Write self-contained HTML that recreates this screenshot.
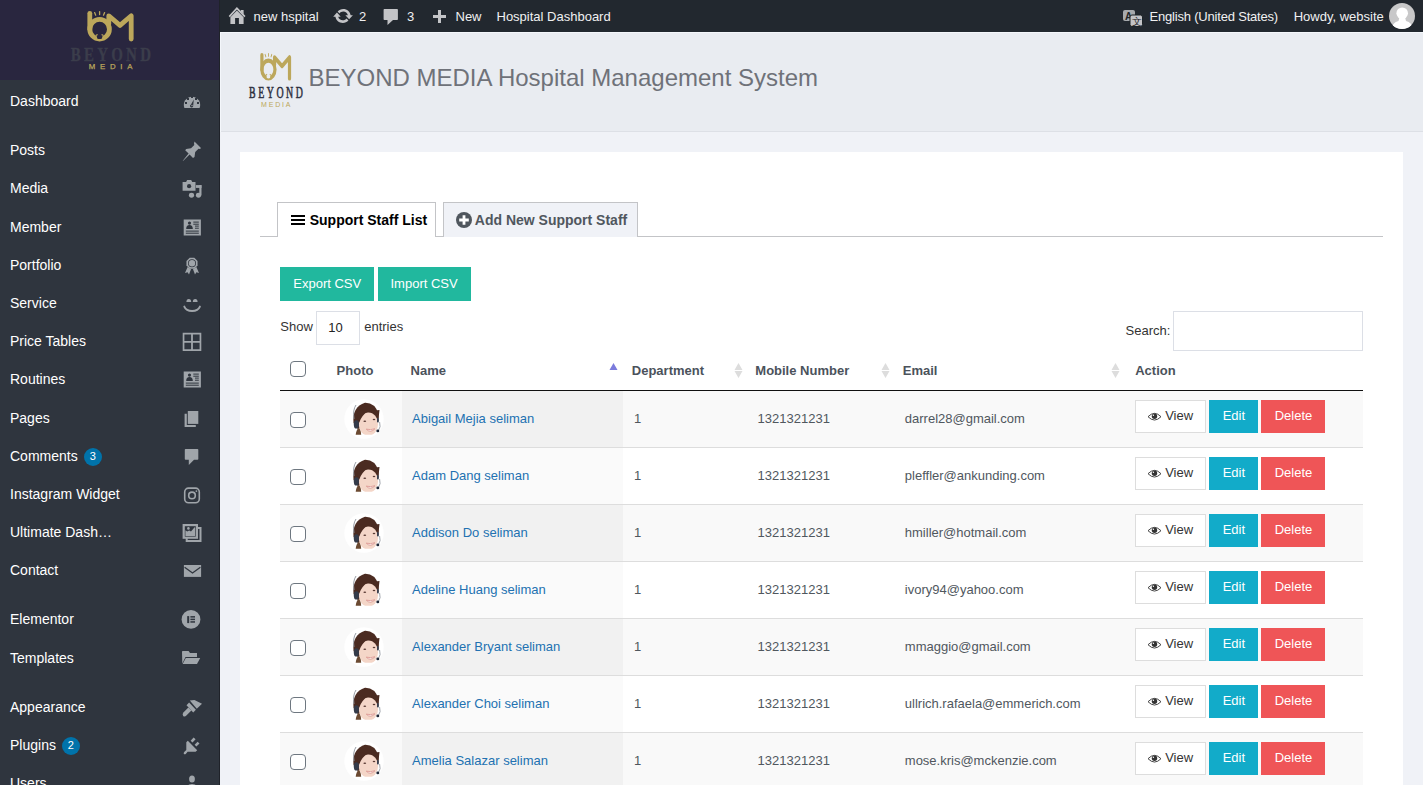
<!DOCTYPE html><html><head><meta charset="utf-8"><title>Support Staff</title><style>
*{margin:0;padding:0;box-sizing:border-box}
html,body{width:1423px;height:785px;overflow:hidden;background:#f0f2f7;font-family:"Liberation Sans",sans-serif}
.t{position:absolute;white-space:nowrap}
.abs{position:absolute}
svg{position:absolute;overflow:visible}
</style></head><body><div class="abs" style="left:0;top:0;width:220px;height:785px;background:#2f353e"></div>
<div class="abs" style="left:0;top:0;width:220px;height:80px;background:#29263f"></div>
<div class="abs" style="left:219px;top:0;width:1px;height:785px;background:#1f2229"></div>
<svg style="left:0;top:0" width="220" height="80" viewBox="0 0 220 80"><g fill="none" stroke="#bca75b" stroke-width="4.8" stroke-linecap="round" stroke-linejoin="round">
<path d="M89.8 13.3 V29.2"/><circle cx="99.6" cy="29.2" r="9.8"/>
<path d="M108.8 24 V15.8 L120 25.4 L131.2 15.8 V39"/>
<path d="M94.6 12.6 L95.7 15.2 M99.6 11.6 V14.6 M104.6 12.6 L103.5 15.2" stroke-width="1.3"/>
</g><path d="M96.6 35 H102.6 L102 38.6 Q99.6 39.6 97.2 38.6 Z" fill="#29263f"/><path d="M95.8 35.6 L97.6 34.4 M103.4 35.6 L101.6 34.4" stroke="#bca75b" stroke-width="1.2"/><g transform="translate(70.7 0) scale(0.78 1)"><text x="0" y="60.7" font-family="Liberation Serif" font-weight="bold" font-size="19.2" fill="#3b3d4b" stroke="#3b3d4b" stroke-width="0.3" textLength="102.9" lengthAdjust="spacing">BEYOND</text></g><text x="88.8" y="68.9" font-family="Liberation Sans" font-size="7.8" fill="#bca75b" stroke="#bca75b" stroke-width="0.25" textLength="43.6" lengthAdjust="spacing">MEDIA</text></svg>
<div class="t" style="left:10px;top:94.00px;font-size:14px;line-height:14px;color:#ffffff;font-weight:normal;">Dashboard</div>
<svg style="left:172px;top:86px" width="40" height="30" viewBox="172 86 40 30"><path d="M184.4 108 A8.2 8.2 0 1 1 199.6 108 Z" fill="#a0a5aa"/><rect x="185" y="102" width="2" height="2" fill="#2f353e"/><rect x="187" y="98" width="2" height="2" fill="#2f353e"/><rect x="191" y="96" width="2" height="2" fill="#2f353e"/><rect x="195" y="98" width="2" height="2" fill="#2f353e"/><rect x="197" y="102" width="2" height="2" fill="#2f353e"/><path d="M193.8 99.5 L193.2 105.6 A1.6 1.6 0 1 1 191 104.4 Z" fill="#2f353e"/><circle cx="192" cy="105.5" r=".7" fill="#a0a5aa"/></svg>
<div class="t" style="left:10px;top:143.00px;font-size:14px;line-height:14px;color:#ffffff;font-weight:normal;">Posts</div>
<svg style="left:172px;top:135px" width="40" height="30" viewBox="172 135 40 30"><path d="M194.5 141.5 L201 148 L200 149 L198.5 148.7 L195.2 152 L194.5 157 L193 158 L189.6 154.6 L183 161 L182.8 160.8 L188.6 153.6 L185.2 150.2 L186.2 149 L191 148.3 L194.3 145 L194 143.5 Z" fill="#a0a5aa"/></svg>
<div class="t" style="left:10px;top:181.00px;font-size:14px;line-height:14px;color:#ffffff;font-weight:normal;">Media</div>
<svg style="left:172px;top:173px" width="40" height="30" viewBox="172 173 40 30"><g transform="translate(0 0)"><path d="M182.6 181.9 h3.5 l1-1.8 h4.1 l1 1.8 h3.3 v8.9 h-12.9 z" fill="#a0a5aa"/><circle cx="189.1" cy="186.2" r="2.1" fill="#2f353e"/><ellipse cx="191.5" cy="195.3" rx="2.6" ry="2.45" fill="#a0a5aa"/><ellipse cx="198.5" cy="195.3" rx="2.6" ry="2.45" fill="#a0a5aa"/><rect x="199.3" y="185.1" width="2.2" height="10.2" fill="#a0a5aa"/><rect x="195.9" y="185.1" width="5.6" height="2.8" fill="#a0a5aa"/></g></svg>
<div class="t" style="left:10px;top:220.00px;font-size:14px;line-height:14px;color:#ffffff;font-weight:normal;">Member</div>
<svg style="left:172px;top:212px" width="40" height="30" viewBox="172 212 40 30"><rect x="183.7" y="219.5" width="17.2" height="16" fill="#a0a5aa"/><circle cx="189.5" cy="223.1" r="1.6" fill="#2f353e"/><path d="M186.2 229.1 q0-4 3.3-4 q3.3 0 3.3 4z" fill="#2f353e"/><rect x="193.3" y="221.6" width="5.5" height="1" fill="#2f353e"/><rect x="193.3" y="223.7" width="5.5" height="1" fill="#2f353e"/><rect x="195" y="225.6" width="3.8000000000000114" height="1" fill="#2f353e"/><rect x="195" y="227.7" width="3.8000000000000114" height="1" fill="#2f353e"/><rect x="185.8" y="230.6" width="13" height="1" fill="#2f353e"/><rect x="185.8" y="232.7" width="13" height="1" fill="#2f353e"/></svg>
<div class="t" style="left:10px;top:258.00px;font-size:14px;line-height:14px;color:#ffffff;font-weight:normal;">Portfolio</div>
<svg style="left:172px;top:250px" width="40" height="30" viewBox="172 250 40 30"><polygon points="197.54,265.60 194.30,268.84 189.70,268.84 186.46,265.60 186.46,261.00 189.70,257.76 194.30,257.76 197.54,261.00" fill="#a0a5aa"/><circle cx="192" cy="263.3" r="4" fill="#2f353e"/><circle cx="192" cy="263.3" r="3.2" fill="#a0a5aa"/><path d="M187.6 267.1 L185 272.9 L187.6 272.3 L189 274.5 L191 269.3 Z M196.4 267.1 L199 272.9 L196.4 272.3 L195 274.5 L193 269.3 Z" fill="#a0a5aa"/></svg>
<div class="t" style="left:10px;top:296.00px;font-size:14px;line-height:14px;color:#ffffff;font-weight:normal;">Service</div>
<svg style="left:172px;top:288px" width="40" height="30" viewBox="172 288 40 30"><g transform="translate(0 0)"><path d="M186.4 302.1 a2.4 3.1 0 0 1 4.8 0 z M192.8 302.1 a2.4 3.1 0 0 1 4.8 0 z" fill="#a0a5aa"/><path d="M184.3 306.6 A8.2 6.3 0 0 0 199.9 306.6" fill="none" stroke="#a0a5aa" stroke-width="1.9" stroke-linecap="round"/></g></svg>
<div class="t" style="left:10px;top:334.00px;font-size:14px;line-height:14px;color:#ffffff;font-weight:normal;">Price Tables</div>
<svg style="left:172px;top:326px" width="40" height="30" viewBox="172 326 40 30"><path d="M182.7 332.7 H201.3 V351.0 H182.7 Z M184.4 334.4 V340.9 H191.1 V334.4 Z M192.9 334.4 V340.9 H199.6 V334.4 Z M184.4 342.7 V349.3 H191.1 V342.7 Z M192.9 342.7 V349.3 H199.6 V342.7 Z" fill="#a0a5aa" fill-rule="evenodd"/></svg>
<div class="t" style="left:10px;top:372.00px;font-size:14px;line-height:14px;color:#ffffff;font-weight:normal;">Routines</div>
<svg style="left:172px;top:364px" width="40" height="30" viewBox="172 364 40 30"><rect x="183.7" y="371.5" width="17.2" height="16" fill="#a0a5aa"/><circle cx="189.5" cy="375.1" r="1.6" fill="#2f353e"/><path d="M186.2 381.1 q0-4 3.3-4 q3.3 0 3.3 4z" fill="#2f353e"/><rect x="193.3" y="373.6" width="5.5" height="1" fill="#2f353e"/><rect x="193.3" y="375.7" width="5.5" height="1" fill="#2f353e"/><rect x="195" y="377.6" width="3.8000000000000114" height="1" fill="#2f353e"/><rect x="195" y="379.7" width="3.8000000000000114" height="1" fill="#2f353e"/><rect x="185.8" y="382.6" width="13" height="1" fill="#2f353e"/><rect x="185.8" y="384.7" width="13" height="1" fill="#2f353e"/></svg>
<div class="t" style="left:10px;top:411.00px;font-size:14px;line-height:14px;color:#ffffff;font-weight:normal;">Pages</div>
<svg style="left:172px;top:403px" width="40" height="30" viewBox="172 403 40 30"><path d="M184.6 413.7 H186.8 V424.9 H195.8 V426.9 H184.6 Z" fill="#a0a5aa"/><rect x="187.8" y="411" width="10.5" height="12.9" fill="#a0a5aa"/></svg>
<div class="t" style="left:10px;top:449.00px;font-size:14px;line-height:14px;color:#ffffff;font-weight:normal;">Comments</div>
<svg style="left:172px;top:441px" width="40" height="30" viewBox="172 441 40 30"><path d="M185.6 449 H197.5 q.8 0 .8 .8 V459 q0 .8-.8 .8 H194 L188.8 465 V459.8 H185.6 q-.8 0-.8-.8 V449.8 q0-.8 .8-.8z" fill="#a0a5aa"/></svg>
<div class="t" style="left:10px;top:487.00px;font-size:14px;line-height:14px;color:#ffffff;font-weight:normal;">Instagram Widget</div>
<svg style="left:172px;top:479px" width="40" height="30" viewBox="172 479 40 30"><rect x="184.7" y="488.1" width="14.6" height="14.6" rx="3.8" fill="none" stroke="#a0a5aa" stroke-width="1.6"/><circle cx="192" cy="495.4" r="3.3" fill="none" stroke="#a0a5aa" stroke-width="1.6"/><circle cx="196.4" cy="491.1" r="0.9" fill="#a0a5aa"/></svg>
<div class="t" style="left:10px;top:525.00px;font-size:14px;line-height:14px;color:#ffffff;font-weight:normal;">Ultimate Dash…</div>
<svg style="left:172px;top:517px" width="40" height="30" viewBox="172 517 40 30"><rect x="186.7" y="528" width="13.8" height="13" fill="none" stroke="#a0a5aa" stroke-width="2"/><rect x="182.6" y="524" width="15.4" height="14.8" fill="#a0a5aa"/><rect x="184.8" y="526.2" width="11" height="10.4" fill="#2f353e"/><path d="M185.4 536 V530.2 L187.2 531.6 L189.2 530.4 L191 531.6 L194.6 527.2 L195.2 527.6 V536 Z" fill="#a0a5aa"/><circle cx="188.4" cy="528.4" r="1.3" fill="#a0a5aa"/></svg>
<div class="t" style="left:10px;top:563.00px;font-size:14px;line-height:14px;color:#ffffff;font-weight:normal;">Contact</div>
<svg style="left:172px;top:555px" width="40" height="30" viewBox="172 555 40 30"><rect x="183.9" y="565" width="17.2" height="11.9" fill="#a0a5aa"/><path d="M184.6 567.2 L192.5 573 L200.4 567.2" fill="none" stroke="#2f353e" stroke-width="1.3"/></svg>
<div class="t" style="left:10px;top:612.00px;font-size:14px;line-height:14px;color:#ffffff;font-weight:normal;">Elementor</div>
<svg style="left:172px;top:604px" width="40" height="30" viewBox="172 604 40 30"><circle cx="191" cy="619.4" r="9.4" fill="#a0a5aa"/><rect x="187.2" y="616.1" width="2" height="7" fill="#2f353e"/><rect x="190.4" y="616.1" width="4.6" height="1.5" fill="#2f353e"/><rect x="190.4" y="618.65" width="4.6" height="1.5" fill="#2f353e"/><rect x="190.4" y="621.1999999999999" width="4.6" height="1.5" fill="#2f353e"/></svg>
<div class="t" style="left:10px;top:651.00px;font-size:14px;line-height:14px;color:#ffffff;font-weight:normal;">Templates</div>
<svg style="left:172px;top:643px" width="40" height="30" viewBox="172 643 40 30"><path d="M182 651.8 q0-.8 .8-.8 H188.6 L190 653 H197 V657 H185.5 L182.3 663.4 Z" fill="#a0a5aa"/><path d="M185.8 658 H200.2 L197 663.9 H182.6 Z" fill="#a0a5aa"/></svg>
<div class="t" style="left:10px;top:700.00px;font-size:14px;line-height:14px;color:#ffffff;font-weight:normal;">Appearance</div>
<svg style="left:172px;top:692px" width="40" height="30" viewBox="172 692 40 30"><g transform="translate(0 0)"><path d="M189.8 700.5 L194.4 700.1 L202 703.8 L196.8 708.7 Z" fill="#a0a5aa"/><path d="M186.5 705.3 L189.1 702.6 L195.9 709.7 L193.2 712.5 Z" fill="#a0a5aa"/><path d="M188.4 707.6 L191.4 710.6 L186.4 715.6 Q184.6 717.2 183.2 715.9 Q181.9 714.5 183.4 712.6 Z" fill="#a0a5aa"/></g></svg>
<div class="t" style="left:10px;top:738.00px;font-size:14px;line-height:14px;color:#ffffff;font-weight:normal;">Plugins</div>
<svg style="left:172px;top:730px" width="40" height="30" viewBox="172 730 40 30"><g transform="translate(0 0)"><path d="M187.8 740.8 L197.2 750.3 L195.6 751.7 L187.6 751.7 L185.8 753.9 Q184.6 754.6 183.9 753.9 Q183.3 753.1 184.2 752 L186.3 749.9 L186.3 742.3 Z" fill="#a0a5aa"/><path d="M190.6 740.8 L193.6 737.6 L195.6 739.3 L192.5 742.6 Z M194.6 744.8 L197.6 741.7 L199.5 743.4 L196.4 746.6 Z" fill="#a0a5aa"/></g></svg>
<div class="t" style="left:10px;top:776.00px;font-size:14px;line-height:14px;color:#ffffff;font-weight:normal;">Users</div>
<svg style="left:172px;top:768px" width="40" height="30" viewBox="172 768 40 30"><ellipse cx="192" cy="779" rx="2.9" ry="3.6" fill="#a0a5aa"/><path d="M185.5 791 Q185.5 784 192 784 Q198.5 784 198.5 791 Z" fill="#a0a5aa"/></svg>
<div class="abs" style="left:84px;top:448px;width:18px;height:18px;border-radius:9px;background:#0073aa"></div>
<div class="t" style="left:89.8px;top:450.50px;font-size:11px;line-height:11px;color:#fff;font-weight:normal;">3</div>
<div class="abs" style="left:62px;top:737px;width:18px;height:18px;border-radius:9px;background:#0073aa"></div>
<div class="t" style="left:67.8px;top:739.50px;font-size:11px;line-height:11px;color:#fff;font-weight:normal;">2</div>
<div class="abs" style="left:220px;top:0;width:1203px;height:32px;background:#22282f"></div>
<svg style="left:220px;top:0" width="40" height="32" viewBox="220 0 40 32"><path d="M229.3 16.6 L236.9 8.3 L244.9 16.6" fill="none" stroke="#c3c4c7" stroke-width="1.7"/><path d="M240.8 10 H243.6 V14.5 L240.8 11.6Z" fill="#c3c4c7"/><path d="M230.4 17.2 L236.9 10.6 L243.6 17.2 V24 H238.9 V18.1 H235.1 V24 H230.4 Z" fill="#c3c4c7"/></svg>
<div class="t" style="left:253.5px;top:10.00px;font-size:13px;line-height:13px;color:#f0f0f1;font-weight:normal;">new hspital</div>
<svg style="left:320px;top:0" width="90" height="32" viewBox="320 0 90 32"><path transform="translate(332.34 5.49) scale(1.07 1.04)" d="M10.2 3.28c3.53 0 6.43 2.61 6.92 6h2.08l-3.5 4-3.5-4h2.32c-.45-1.97-2.210-3.450-4.320-3.450-1.450 0-2.730.710-3.540 1.780L4.950 5.660C6.230 4.180 8.110 3.280 10.200 3.280zm-.4 13.44c-3.520 0-6.430-2.610-6.920-6H.800l3.500-4c1.170 1.330 2.330 2.670 3.500 4H5.480c.450 1.970 2.210 3.450 4.320 3.450 1.450 0 2.730-.710 3.540-1.780l1.710 1.950c-1.280 1.480-3.160 2.380-5.250 2.380z" fill="#c3c4c7"/><path d="M384.4 8.9 H397.1 q.8 0 .8 .8 V19.2 q0 .8-.8 .8 H393 L387.5 24.9 V20 H384.4 q-.8 0-.8-.8 V9.7 q0-.8 .8-.8z" fill="#c3c4c7"/></svg>
<div class="t" style="left:359px;top:10.00px;font-size:13px;line-height:13px;color:#f0f0f1;font-weight:normal;">2</div>
<div class="t" style="left:407px;top:10.00px;font-size:13px;line-height:13px;color:#f0f0f1;font-weight:normal;">3</div>
<svg style="left:432px;top:9px" width="15" height="15" viewBox="0 0 15 15"><path d="M6 1 H9 V6 H14 V9 H9 V14 H6 V9 H1 V6 H6 Z" fill="#c3c4c7"/></svg>
<div class="t" style="left:455.5px;top:10.00px;font-size:13px;line-height:13px;color:#f0f0f1;font-weight:normal;">New</div>
<div class="t" style="left:496.5px;top:10.00px;font-size:13px;line-height:13px;color:#f0f0f1;font-weight:normal;">Hospital Dashboard</div>
<svg style="left:1122px;top:9px" width="22" height="18" viewBox="0 0 22 18"><rect x="1" y="1" width="12" height="11" rx="2" fill="#a7aaad"/><text x="3" y="10.5" font-family="Liberation Sans" font-weight="bold" font-size="10" fill="#1d2327">A</text><rect x="8" y="6" width="12.5" height="11.5" rx="2" fill="#c3c4c7" stroke="#1d2327" stroke-width="1"/><text x="10" y="16" font-family="Liberation Sans" font-size="10" fill="#1d2327">文</text></svg>
<div class="t" style="left:1149.6px;top:10.00px;font-size:13px;line-height:13px;color:#f0f0f1;font-weight:normal;letter-spacing:-0.2px">English (United States)</div>
<div class="t" style="left:1293.7px;top:10.00px;font-size:13px;line-height:13px;color:#f0f0f1;font-weight:normal;">Howdy, website</div>
<svg style="left:1389px;top:3px" width="26" height="26" viewBox="0 0 26 26"><defs><clipPath id="av"><circle cx="13" cy="13" r="13"/></clipPath></defs><circle cx="13" cy="13" r="13" fill="#c8c8c9"/><g clip-path="url(#av)" fill="#fff"><circle cx="13.2" cy="10.2" r="5.8"/><path d="M10.5 14 H16 L17 18 Q23.5 19.5 24 27 H2.5 Q3 19.5 9.5 18Z"/></g></svg>
<div class="abs" style="left:220px;top:32px;width:1203px;height:100px;background:#e9ecf1;border-bottom:1px solid #dde0e6"></div>
<div class="abs" style="left:220px;top:32px;width:1203px;height:1px;background:#f4f7fb"></div>
<div class="abs" style="left:220px;top:32px;width:1px;height:100px;background:#f4f7fb"></div>
<svg style="left:220px;top:32px" width="120" height="100" viewBox="220 32 120 100"><g transform="translate(202.0 43.0) scale(0.667 0.908)"><g fill="none" stroke="#bca75b" stroke-width="4.8" stroke-linecap="round" stroke-linejoin="round">
<path d="M89.8 13.3 V29.2"/><circle cx="99.6" cy="29.2" r="9.8"/>
<path d="M108.8 24 V15.8 L120 25.4 L131.2 15.8 V39"/>
<path d="M94.6 12.6 L95.7 15.2 M99.6 11.6 V14.6 M104.6 12.6 L103.5 15.2" stroke-width="1.3"/>
</g><path d="M96.6 35 H102.6 L102 38.6 Q99.6 39.6 97.2 38.6 Z" fill="#e9ecf1"/><path d="M95.8 35.6 L97.6 34.4 M103.4 35.6 L101.6 34.4" stroke="#bca75b" stroke-width="1.2"/></g><g transform="translate(249.1 0) scale(0.58 1)"><text x="0" y="98.4" font-family="Liberation Serif" font-size="17" fill="#2d2f3e" stroke="#2d2f3e" stroke-width="0.6" textLength="92.6" lengthAdjust="spacing">BEYOND</text></g><text x="261.1" y="106.7" font-family="Liberation Sans" font-size="7" fill="#bca75b" textLength="29.4" lengthAdjust="spacing">MEDIA</text></svg>
<div class="t" style="left:308.5px;top:66.00px;font-size:24px;line-height:24px;color:#6f7279;font-weight:normal;">BEYOND MEDIA Hospital Management System</div>
<div class="abs" style="left:240px;top:152px;width:1163px;height:700px;background:#fff"></div>
<div class="abs" style="left:260px;top:236px;width:1123px;height:1px;background:#c3c4c7"></div>
<div class="abs" style="left:277px;top:202px;width:159px;height:35px;background:#fff;border:1px solid #c3c4c7;border-bottom:none"></div>
<div class="abs" style="left:443px;top:202px;width:195px;height:35px;background:#f0f2f7;border:1px solid #c3c4c7;border-bottom:none"></div>
<svg style="left:291px;top:215px" width="14" height="10" viewBox="0 0 14 10"><rect x="0" y="0" width="14" height="2" fill="#000"/><rect x="0" y="4" width="14" height="2" fill="#000"/><rect x="0" y="8" width="14" height="2" fill="#000"/></svg>
<div class="t" style="left:309.7px;top:212.50px;font-size:14px;line-height:14px;color:#000;font-weight:bold;">Support Staff List</div>
<svg style="left:456px;top:212px" width="16" height="16" viewBox="0 0 16 16"><circle cx="8" cy="8" r="8" fill="#50575e"/><path d="M6.6 3.2 H9.4 V6.6 H12.8 V9.4 H9.4 V12.8 H6.6 V9.4 H3.2 V6.6 H6.6Z" fill="#fff"/></svg>
<div class="t" style="left:474.8px;top:212.50px;font-size:14px;line-height:14px;color:#50575e;font-weight:bold;">Add New Support Staff</div>
<div class="abs" style="left:280px;top:267px;width:94px;height:34px;background:#21b89e"></div>
<div class="t" style="left:293.3px;top:277.00px;font-size:13px;line-height:13px;color:#fff;font-weight:normal;">Export CSV</div>
<div class="abs" style="left:378px;top:267px;width:93px;height:34px;background:#21b89e"></div>
<div class="t" style="left:390.5px;top:277.00px;font-size:13px;line-height:13px;color:#fff;font-weight:normal;">Import CSV</div>
<div class="t" style="left:280.3px;top:319.50px;font-size:13px;line-height:13px;color:#333;font-weight:normal;">Show</div>
<div class="abs" style="left:316px;top:311px;width:44px;height:34px;background:#fff;border:1px solid #dcdfe6"></div>
<div class="t" style="left:328.3px;top:321.00px;font-size:13px;line-height:13px;color:#222;font-weight:normal;">10</div>
<div class="t" style="left:364.2px;top:319.50px;font-size:13px;line-height:13px;color:#333;font-weight:normal;">entries</div>
<div class="t" style="left:1125.6px;top:324.00px;font-size:13px;line-height:13px;color:#333;font-weight:normal;">Search:</div>
<div class="abs" style="left:1173px;top:311px;width:190px;height:40px;background:#fff;border:1px solid #dcdfe6"></div>
<div class="abs" style="left:290px;top:361px;width:16px;height:16px;border:1px solid #6e7780;border-radius:4px;background:#fff"></div>
<div class="t" style="left:336.6px;top:364.00px;font-size:13px;line-height:13px;color:#4b525b;font-weight:bold;">Photo</div>
<div class="t" style="left:410.6px;top:364.00px;font-size:13px;line-height:13px;color:#4b525b;font-weight:bold;">Name</div>
<div class="t" style="left:631.8px;top:364.00px;font-size:13px;line-height:13px;color:#4b525b;font-weight:bold;">Department</div>
<div class="t" style="left:755.3px;top:364.00px;font-size:13px;line-height:13px;color:#4b525b;font-weight:bold;">Mobile Number</div>
<div class="t" style="left:902.8px;top:364.00px;font-size:13px;line-height:13px;color:#4b525b;font-weight:bold;">Email</div>
<div class="t" style="left:1135.2px;top:364.00px;font-size:13px;line-height:13px;color:#4b525b;font-weight:bold;">Action</div>
<svg style="left:609px;top:363px" width="9" height="8" viewBox="0 0 9 8"><path d="M4.5 0 L8.5 7 H0.5Z" fill="#7b7bdc"/></svg>
<svg style="left:733.5px;top:363px" width="9" height="15" viewBox="0 0 9 15"><path d="M4.5 0 L8.5 7 H0.5Z M4.5 15 L8.5 8 H0.5Z" fill="#dddddd"/></svg>
<svg style="left:880.5px;top:363px" width="9" height="15" viewBox="0 0 9 15"><path d="M4.5 0 L8.5 7 H0.5Z M4.5 15 L8.5 8 H0.5Z" fill="#dddddd"/></svg>
<svg style="left:1111px;top:363px" width="9" height="15" viewBox="0 0 9 15"><path d="M4.5 0 L8.5 7 H0.5Z M4.5 15 L8.5 8 H0.5Z" fill="#dddddd"/></svg>
<div class="abs" style="left:280px;top:390px;width:1083px;height:1px;background:#111"></div>
<svg style="left:0;top:0" width="0" height="0"><defs><clipPath id="fc"><rect x="0" y="0" width="40" height="35.8"/></clipPath></defs></svg>
<div class="abs" style="left:280px;top:391px;width:1083px;height:57px;background:#f9f9f9;border-bottom:1px solid #dddddd"></div>
<div class="abs" style="left:402px;top:391px;width:221px;height:56px;background:#f1f1f1"></div>
<div class="abs" style="left:290px;top:412px;width:16px;height:16px;border:1px solid #6e7780;border-radius:4px;background:#fff"></div>
<svg style="left:343.7px;top:399px" width="40" height="40" viewBox="0 0 40 40">
<circle cx="20" cy="20" r="19.7" fill="#fff"/>
<g clip-path="url(#fc)">
<path d="M9.5 24 Q8 8 21 3.8 Q31 3.5 34.5 15 L34.6 22 L14 30 Z" fill="#4b2b21"/>
<path d="M10 20 Q8.6 11 12 6" fill="none" stroke="#8d939c" stroke-width="0.9"/>
<path d="M11.6 37 Q12 31 14.8 28.8 Q17.2 31 17.2 37Z" fill="#6b4a32"/>
<ellipse cx="24.4" cy="25" rx="9.7" ry="11.6" fill="#f4d6c8"/>
<path d="M13.6 31 L15 24 Q18 15.8 23.5 12.8 L13 11 Z" fill="#4b2b21"/>
<path d="M21.8 12.4 Q28 11.4 31.4 15 Q33 16.6 34.5 19.8 L35.5 11 Z" fill="#4b2b21"/>
<ellipse cx="12.4" cy="25.4" rx="2.6" ry="4.2" fill="#343b4a"/>
<rect x="33" y="19" width="1.8" height="4.6" rx=".8" fill="#3a4150"/>
<path d="M35.6 23 Q37.2 28 34.4 31.6" fill="none" stroke="#8a9099" stroke-width="0.8"/>
<circle cx="33.8" cy="31.9" r="1.45" fill="#1f2636"/>
<ellipse cx="20.8" cy="22.3" rx="1.4" ry="0.75" fill="#5a3c36"/><ellipse cx="30" cy="20.4" rx="1.3" ry="0.75" fill="#5a3c36"/>
<path d="M22.3 30.2 Q26.5 34.4 30.9 29.8 Q26.5 31.2 22.3 30.2Z" fill="#fff" stroke="#d9908a" stroke-width="0.8"/>
</g>
</svg>
<div class="t" style="left:412.1px;top:412.00px;font-size:13px;line-height:13px;color:#2271b1;font-weight:normal;">Abigail Mejia seliman</div>
<div class="t" style="left:634px;top:412.00px;font-size:13px;line-height:13px;color:#50575e;font-weight:normal;">1</div>
<div class="t" style="left:757.6px;top:412.00px;font-size:13px;line-height:13px;color:#50575e;font-weight:normal;">1321321231</div>
<div class="t" style="left:904.8px;top:412.00px;font-size:13px;line-height:13px;color:#50575e;font-weight:normal;">darrel28@gmail.com</div>
<div class="abs" style="left:1135px;top:400px;width:71px;height:33px;background:#fff;border:1px solid #dddddd"></div>
<svg style="left:1147px;top:412px" width="15" height="10" viewBox="0 0 15 10"><path d="M1 4.7 Q7.5 -2 14 4.7 Q7.5 11.4 1 4.7Z" fill="none" stroke="#333" stroke-width="0.9"/><circle cx="7.5" cy="4.2" r="2.7" fill="#333"/><circle cx="6.4" cy="3.2" r=".7" fill="#fff"/></svg>
<div class="t" style="left:1165.2px;top:408.80px;font-size:13px;line-height:13px;color:#333;font-weight:normal;">View</div>
<div class="abs" style="left:1209px;top:400px;width:49px;height:33px;background:#12abc9"></div>
<div class="t" style="left:1222.7px;top:408.80px;font-size:13px;line-height:13px;color:#fff;font-weight:normal;">Edit</div>
<div class="abs" style="left:1261px;top:400px;width:64px;height:33px;background:#ef5557"></div>
<div class="t" style="left:1274.7px;top:408.80px;font-size:13px;line-height:13px;color:#fff;font-weight:normal;">Delete</div>
<div class="abs" style="left:280px;top:448px;width:1083px;height:57px;background:#fff;border-bottom:1px solid #dddddd"></div>
<div class="abs" style="left:402px;top:448px;width:221px;height:56px;background:#fafafa"></div>
<div class="abs" style="left:290px;top:469px;width:16px;height:16px;border:1px solid #6e7780;border-radius:4px;background:#fff"></div>
<svg style="left:343.7px;top:456px" width="40" height="40" viewBox="0 0 40 40">
<circle cx="20" cy="20" r="19.7" fill="#fff"/>
<g clip-path="url(#fc)">
<path d="M9.5 24 Q8 8 21 3.8 Q31 3.5 34.5 15 L34.6 22 L14 30 Z" fill="#4b2b21"/>
<path d="M10 20 Q8.6 11 12 6" fill="none" stroke="#8d939c" stroke-width="0.9"/>
<path d="M11.6 37 Q12 31 14.8 28.8 Q17.2 31 17.2 37Z" fill="#6b4a32"/>
<ellipse cx="24.4" cy="25" rx="9.7" ry="11.6" fill="#f4d6c8"/>
<path d="M13.6 31 L15 24 Q18 15.8 23.5 12.8 L13 11 Z" fill="#4b2b21"/>
<path d="M21.8 12.4 Q28 11.4 31.4 15 Q33 16.6 34.5 19.8 L35.5 11 Z" fill="#4b2b21"/>
<ellipse cx="12.4" cy="25.4" rx="2.6" ry="4.2" fill="#343b4a"/>
<rect x="33" y="19" width="1.8" height="4.6" rx=".8" fill="#3a4150"/>
<path d="M35.6 23 Q37.2 28 34.4 31.6" fill="none" stroke="#8a9099" stroke-width="0.8"/>
<circle cx="33.8" cy="31.9" r="1.45" fill="#1f2636"/>
<ellipse cx="20.8" cy="22.3" rx="1.4" ry="0.75" fill="#5a3c36"/><ellipse cx="30" cy="20.4" rx="1.3" ry="0.75" fill="#5a3c36"/>
<path d="M22.3 30.2 Q26.5 34.4 30.9 29.8 Q26.5 31.2 22.3 30.2Z" fill="#fff" stroke="#d9908a" stroke-width="0.8"/>
</g>
</svg>
<div class="t" style="left:412.1px;top:469.00px;font-size:13px;line-height:13px;color:#2271b1;font-weight:normal;">Adam Dang seliman</div>
<div class="t" style="left:634px;top:469.00px;font-size:13px;line-height:13px;color:#50575e;font-weight:normal;">1</div>
<div class="t" style="left:757.6px;top:469.00px;font-size:13px;line-height:13px;color:#50575e;font-weight:normal;">1321321231</div>
<div class="t" style="left:904.8px;top:469.00px;font-size:13px;line-height:13px;color:#50575e;font-weight:normal;">pleffler@ankunding.com</div>
<div class="abs" style="left:1135px;top:457px;width:71px;height:33px;background:#fff;border:1px solid #dddddd"></div>
<svg style="left:1147px;top:469px" width="15" height="10" viewBox="0 0 15 10"><path d="M1 4.7 Q7.5 -2 14 4.7 Q7.5 11.4 1 4.7Z" fill="none" stroke="#333" stroke-width="0.9"/><circle cx="7.5" cy="4.2" r="2.7" fill="#333"/><circle cx="6.4" cy="3.2" r=".7" fill="#fff"/></svg>
<div class="t" style="left:1165.2px;top:465.80px;font-size:13px;line-height:13px;color:#333;font-weight:normal;">View</div>
<div class="abs" style="left:1209px;top:457px;width:49px;height:33px;background:#12abc9"></div>
<div class="t" style="left:1222.7px;top:465.80px;font-size:13px;line-height:13px;color:#fff;font-weight:normal;">Edit</div>
<div class="abs" style="left:1261px;top:457px;width:64px;height:33px;background:#ef5557"></div>
<div class="t" style="left:1274.7px;top:465.80px;font-size:13px;line-height:13px;color:#fff;font-weight:normal;">Delete</div>
<div class="abs" style="left:280px;top:505px;width:1083px;height:57px;background:#f9f9f9;border-bottom:1px solid #dddddd"></div>
<div class="abs" style="left:402px;top:505px;width:221px;height:56px;background:#f1f1f1"></div>
<div class="abs" style="left:290px;top:526px;width:16px;height:16px;border:1px solid #6e7780;border-radius:4px;background:#fff"></div>
<svg style="left:343.7px;top:513px" width="40" height="40" viewBox="0 0 40 40">
<circle cx="20" cy="20" r="19.7" fill="#fff"/>
<g clip-path="url(#fc)">
<path d="M9.5 24 Q8 8 21 3.8 Q31 3.5 34.5 15 L34.6 22 L14 30 Z" fill="#4b2b21"/>
<path d="M10 20 Q8.6 11 12 6" fill="none" stroke="#8d939c" stroke-width="0.9"/>
<path d="M11.6 37 Q12 31 14.8 28.8 Q17.2 31 17.2 37Z" fill="#6b4a32"/>
<ellipse cx="24.4" cy="25" rx="9.7" ry="11.6" fill="#f4d6c8"/>
<path d="M13.6 31 L15 24 Q18 15.8 23.5 12.8 L13 11 Z" fill="#4b2b21"/>
<path d="M21.8 12.4 Q28 11.4 31.4 15 Q33 16.6 34.5 19.8 L35.5 11 Z" fill="#4b2b21"/>
<ellipse cx="12.4" cy="25.4" rx="2.6" ry="4.2" fill="#343b4a"/>
<rect x="33" y="19" width="1.8" height="4.6" rx=".8" fill="#3a4150"/>
<path d="M35.6 23 Q37.2 28 34.4 31.6" fill="none" stroke="#8a9099" stroke-width="0.8"/>
<circle cx="33.8" cy="31.9" r="1.45" fill="#1f2636"/>
<ellipse cx="20.8" cy="22.3" rx="1.4" ry="0.75" fill="#5a3c36"/><ellipse cx="30" cy="20.4" rx="1.3" ry="0.75" fill="#5a3c36"/>
<path d="M22.3 30.2 Q26.5 34.4 30.9 29.8 Q26.5 31.2 22.3 30.2Z" fill="#fff" stroke="#d9908a" stroke-width="0.8"/>
</g>
</svg>
<div class="t" style="left:412.1px;top:526.00px;font-size:13px;line-height:13px;color:#2271b1;font-weight:normal;">Addison Do seliman</div>
<div class="t" style="left:634px;top:526.00px;font-size:13px;line-height:13px;color:#50575e;font-weight:normal;">1</div>
<div class="t" style="left:757.6px;top:526.00px;font-size:13px;line-height:13px;color:#50575e;font-weight:normal;">1321321231</div>
<div class="t" style="left:904.8px;top:526.00px;font-size:13px;line-height:13px;color:#50575e;font-weight:normal;">hmiller@hotmail.com</div>
<div class="abs" style="left:1135px;top:514px;width:71px;height:33px;background:#fff;border:1px solid #dddddd"></div>
<svg style="left:1147px;top:526px" width="15" height="10" viewBox="0 0 15 10"><path d="M1 4.7 Q7.5 -2 14 4.7 Q7.5 11.4 1 4.7Z" fill="none" stroke="#333" stroke-width="0.9"/><circle cx="7.5" cy="4.2" r="2.7" fill="#333"/><circle cx="6.4" cy="3.2" r=".7" fill="#fff"/></svg>
<div class="t" style="left:1165.2px;top:522.80px;font-size:13px;line-height:13px;color:#333;font-weight:normal;">View</div>
<div class="abs" style="left:1209px;top:514px;width:49px;height:33px;background:#12abc9"></div>
<div class="t" style="left:1222.7px;top:522.80px;font-size:13px;line-height:13px;color:#fff;font-weight:normal;">Edit</div>
<div class="abs" style="left:1261px;top:514px;width:64px;height:33px;background:#ef5557"></div>
<div class="t" style="left:1274.7px;top:522.80px;font-size:13px;line-height:13px;color:#fff;font-weight:normal;">Delete</div>
<div class="abs" style="left:280px;top:562px;width:1083px;height:57px;background:#fff;border-bottom:1px solid #dddddd"></div>
<div class="abs" style="left:402px;top:562px;width:221px;height:56px;background:#fafafa"></div>
<div class="abs" style="left:290px;top:583px;width:16px;height:16px;border:1px solid #6e7780;border-radius:4px;background:#fff"></div>
<svg style="left:343.7px;top:570px" width="40" height="40" viewBox="0 0 40 40">
<circle cx="20" cy="20" r="19.7" fill="#fff"/>
<g clip-path="url(#fc)">
<path d="M9.5 24 Q8 8 21 3.8 Q31 3.5 34.5 15 L34.6 22 L14 30 Z" fill="#4b2b21"/>
<path d="M10 20 Q8.6 11 12 6" fill="none" stroke="#8d939c" stroke-width="0.9"/>
<path d="M11.6 37 Q12 31 14.8 28.8 Q17.2 31 17.2 37Z" fill="#6b4a32"/>
<ellipse cx="24.4" cy="25" rx="9.7" ry="11.6" fill="#f4d6c8"/>
<path d="M13.6 31 L15 24 Q18 15.8 23.5 12.8 L13 11 Z" fill="#4b2b21"/>
<path d="M21.8 12.4 Q28 11.4 31.4 15 Q33 16.6 34.5 19.8 L35.5 11 Z" fill="#4b2b21"/>
<ellipse cx="12.4" cy="25.4" rx="2.6" ry="4.2" fill="#343b4a"/>
<rect x="33" y="19" width="1.8" height="4.6" rx=".8" fill="#3a4150"/>
<path d="M35.6 23 Q37.2 28 34.4 31.6" fill="none" stroke="#8a9099" stroke-width="0.8"/>
<circle cx="33.8" cy="31.9" r="1.45" fill="#1f2636"/>
<ellipse cx="20.8" cy="22.3" rx="1.4" ry="0.75" fill="#5a3c36"/><ellipse cx="30" cy="20.4" rx="1.3" ry="0.75" fill="#5a3c36"/>
<path d="M22.3 30.2 Q26.5 34.4 30.9 29.8 Q26.5 31.2 22.3 30.2Z" fill="#fff" stroke="#d9908a" stroke-width="0.8"/>
</g>
</svg>
<div class="t" style="left:412.1px;top:583.00px;font-size:13px;line-height:13px;color:#2271b1;font-weight:normal;">Adeline Huang seliman</div>
<div class="t" style="left:634px;top:583.00px;font-size:13px;line-height:13px;color:#50575e;font-weight:normal;">1</div>
<div class="t" style="left:757.6px;top:583.00px;font-size:13px;line-height:13px;color:#50575e;font-weight:normal;">1321321231</div>
<div class="t" style="left:904.8px;top:583.00px;font-size:13px;line-height:13px;color:#50575e;font-weight:normal;">ivory94@yahoo.com</div>
<div class="abs" style="left:1135px;top:571px;width:71px;height:33px;background:#fff;border:1px solid #dddddd"></div>
<svg style="left:1147px;top:583px" width="15" height="10" viewBox="0 0 15 10"><path d="M1 4.7 Q7.5 -2 14 4.7 Q7.5 11.4 1 4.7Z" fill="none" stroke="#333" stroke-width="0.9"/><circle cx="7.5" cy="4.2" r="2.7" fill="#333"/><circle cx="6.4" cy="3.2" r=".7" fill="#fff"/></svg>
<div class="t" style="left:1165.2px;top:579.80px;font-size:13px;line-height:13px;color:#333;font-weight:normal;">View</div>
<div class="abs" style="left:1209px;top:571px;width:49px;height:33px;background:#12abc9"></div>
<div class="t" style="left:1222.7px;top:579.80px;font-size:13px;line-height:13px;color:#fff;font-weight:normal;">Edit</div>
<div class="abs" style="left:1261px;top:571px;width:64px;height:33px;background:#ef5557"></div>
<div class="t" style="left:1274.7px;top:579.80px;font-size:13px;line-height:13px;color:#fff;font-weight:normal;">Delete</div>
<div class="abs" style="left:280px;top:619px;width:1083px;height:57px;background:#f9f9f9;border-bottom:1px solid #dddddd"></div>
<div class="abs" style="left:402px;top:619px;width:221px;height:56px;background:#f1f1f1"></div>
<div class="abs" style="left:290px;top:640px;width:16px;height:16px;border:1px solid #6e7780;border-radius:4px;background:#fff"></div>
<svg style="left:343.7px;top:627px" width="40" height="40" viewBox="0 0 40 40">
<circle cx="20" cy="20" r="19.7" fill="#fff"/>
<g clip-path="url(#fc)">
<path d="M9.5 24 Q8 8 21 3.8 Q31 3.5 34.5 15 L34.6 22 L14 30 Z" fill="#4b2b21"/>
<path d="M10 20 Q8.6 11 12 6" fill="none" stroke="#8d939c" stroke-width="0.9"/>
<path d="M11.6 37 Q12 31 14.8 28.8 Q17.2 31 17.2 37Z" fill="#6b4a32"/>
<ellipse cx="24.4" cy="25" rx="9.7" ry="11.6" fill="#f4d6c8"/>
<path d="M13.6 31 L15 24 Q18 15.8 23.5 12.8 L13 11 Z" fill="#4b2b21"/>
<path d="M21.8 12.4 Q28 11.4 31.4 15 Q33 16.6 34.5 19.8 L35.5 11 Z" fill="#4b2b21"/>
<ellipse cx="12.4" cy="25.4" rx="2.6" ry="4.2" fill="#343b4a"/>
<rect x="33" y="19" width="1.8" height="4.6" rx=".8" fill="#3a4150"/>
<path d="M35.6 23 Q37.2 28 34.4 31.6" fill="none" stroke="#8a9099" stroke-width="0.8"/>
<circle cx="33.8" cy="31.9" r="1.45" fill="#1f2636"/>
<ellipse cx="20.8" cy="22.3" rx="1.4" ry="0.75" fill="#5a3c36"/><ellipse cx="30" cy="20.4" rx="1.3" ry="0.75" fill="#5a3c36"/>
<path d="M22.3 30.2 Q26.5 34.4 30.9 29.8 Q26.5 31.2 22.3 30.2Z" fill="#fff" stroke="#d9908a" stroke-width="0.8"/>
</g>
</svg>
<div class="t" style="left:412.1px;top:640.00px;font-size:13px;line-height:13px;color:#2271b1;font-weight:normal;">Alexander Bryant seliman</div>
<div class="t" style="left:634px;top:640.00px;font-size:13px;line-height:13px;color:#50575e;font-weight:normal;">1</div>
<div class="t" style="left:757.6px;top:640.00px;font-size:13px;line-height:13px;color:#50575e;font-weight:normal;">1321321231</div>
<div class="t" style="left:904.8px;top:640.00px;font-size:13px;line-height:13px;color:#50575e;font-weight:normal;">mmaggio@gmail.com</div>
<div class="abs" style="left:1135px;top:628px;width:71px;height:33px;background:#fff;border:1px solid #dddddd"></div>
<svg style="left:1147px;top:640px" width="15" height="10" viewBox="0 0 15 10"><path d="M1 4.7 Q7.5 -2 14 4.7 Q7.5 11.4 1 4.7Z" fill="none" stroke="#333" stroke-width="0.9"/><circle cx="7.5" cy="4.2" r="2.7" fill="#333"/><circle cx="6.4" cy="3.2" r=".7" fill="#fff"/></svg>
<div class="t" style="left:1165.2px;top:636.80px;font-size:13px;line-height:13px;color:#333;font-weight:normal;">View</div>
<div class="abs" style="left:1209px;top:628px;width:49px;height:33px;background:#12abc9"></div>
<div class="t" style="left:1222.7px;top:636.80px;font-size:13px;line-height:13px;color:#fff;font-weight:normal;">Edit</div>
<div class="abs" style="left:1261px;top:628px;width:64px;height:33px;background:#ef5557"></div>
<div class="t" style="left:1274.7px;top:636.80px;font-size:13px;line-height:13px;color:#fff;font-weight:normal;">Delete</div>
<div class="abs" style="left:280px;top:676px;width:1083px;height:57px;background:#fff;border-bottom:1px solid #dddddd"></div>
<div class="abs" style="left:402px;top:676px;width:221px;height:56px;background:#fafafa"></div>
<div class="abs" style="left:290px;top:697px;width:16px;height:16px;border:1px solid #6e7780;border-radius:4px;background:#fff"></div>
<svg style="left:343.7px;top:684px" width="40" height="40" viewBox="0 0 40 40">
<circle cx="20" cy="20" r="19.7" fill="#fff"/>
<g clip-path="url(#fc)">
<path d="M9.5 24 Q8 8 21 3.8 Q31 3.5 34.5 15 L34.6 22 L14 30 Z" fill="#4b2b21"/>
<path d="M10 20 Q8.6 11 12 6" fill="none" stroke="#8d939c" stroke-width="0.9"/>
<path d="M11.6 37 Q12 31 14.8 28.8 Q17.2 31 17.2 37Z" fill="#6b4a32"/>
<ellipse cx="24.4" cy="25" rx="9.7" ry="11.6" fill="#f4d6c8"/>
<path d="M13.6 31 L15 24 Q18 15.8 23.5 12.8 L13 11 Z" fill="#4b2b21"/>
<path d="M21.8 12.4 Q28 11.4 31.4 15 Q33 16.6 34.5 19.8 L35.5 11 Z" fill="#4b2b21"/>
<ellipse cx="12.4" cy="25.4" rx="2.6" ry="4.2" fill="#343b4a"/>
<rect x="33" y="19" width="1.8" height="4.6" rx=".8" fill="#3a4150"/>
<path d="M35.6 23 Q37.2 28 34.4 31.6" fill="none" stroke="#8a9099" stroke-width="0.8"/>
<circle cx="33.8" cy="31.9" r="1.45" fill="#1f2636"/>
<ellipse cx="20.8" cy="22.3" rx="1.4" ry="0.75" fill="#5a3c36"/><ellipse cx="30" cy="20.4" rx="1.3" ry="0.75" fill="#5a3c36"/>
<path d="M22.3 30.2 Q26.5 34.4 30.9 29.8 Q26.5 31.2 22.3 30.2Z" fill="#fff" stroke="#d9908a" stroke-width="0.8"/>
</g>
</svg>
<div class="t" style="left:412.1px;top:697.00px;font-size:13px;line-height:13px;color:#2271b1;font-weight:normal;">Alexander Choi seliman</div>
<div class="t" style="left:634px;top:697.00px;font-size:13px;line-height:13px;color:#50575e;font-weight:normal;">1</div>
<div class="t" style="left:757.6px;top:697.00px;font-size:13px;line-height:13px;color:#50575e;font-weight:normal;">1321321231</div>
<div class="t" style="left:904.8px;top:697.00px;font-size:13px;line-height:13px;color:#50575e;font-weight:normal;">ullrich.rafaela@emmerich.com</div>
<div class="abs" style="left:1135px;top:685px;width:71px;height:33px;background:#fff;border:1px solid #dddddd"></div>
<svg style="left:1147px;top:697px" width="15" height="10" viewBox="0 0 15 10"><path d="M1 4.7 Q7.5 -2 14 4.7 Q7.5 11.4 1 4.7Z" fill="none" stroke="#333" stroke-width="0.9"/><circle cx="7.5" cy="4.2" r="2.7" fill="#333"/><circle cx="6.4" cy="3.2" r=".7" fill="#fff"/></svg>
<div class="t" style="left:1165.2px;top:693.80px;font-size:13px;line-height:13px;color:#333;font-weight:normal;">View</div>
<div class="abs" style="left:1209px;top:685px;width:49px;height:33px;background:#12abc9"></div>
<div class="t" style="left:1222.7px;top:693.80px;font-size:13px;line-height:13px;color:#fff;font-weight:normal;">Edit</div>
<div class="abs" style="left:1261px;top:685px;width:64px;height:33px;background:#ef5557"></div>
<div class="t" style="left:1274.7px;top:693.80px;font-size:13px;line-height:13px;color:#fff;font-weight:normal;">Delete</div>
<div class="abs" style="left:280px;top:733px;width:1083px;height:57px;background:#f9f9f9;border-bottom:1px solid #dddddd"></div>
<div class="abs" style="left:402px;top:733px;width:221px;height:56px;background:#f1f1f1"></div>
<div class="abs" style="left:290px;top:754px;width:16px;height:16px;border:1px solid #6e7780;border-radius:4px;background:#fff"></div>
<svg style="left:343.7px;top:741px" width="40" height="40" viewBox="0 0 40 40">
<circle cx="20" cy="20" r="19.7" fill="#fff"/>
<g clip-path="url(#fc)">
<path d="M9.5 24 Q8 8 21 3.8 Q31 3.5 34.5 15 L34.6 22 L14 30 Z" fill="#4b2b21"/>
<path d="M10 20 Q8.6 11 12 6" fill="none" stroke="#8d939c" stroke-width="0.9"/>
<path d="M11.6 37 Q12 31 14.8 28.8 Q17.2 31 17.2 37Z" fill="#6b4a32"/>
<ellipse cx="24.4" cy="25" rx="9.7" ry="11.6" fill="#f4d6c8"/>
<path d="M13.6 31 L15 24 Q18 15.8 23.5 12.8 L13 11 Z" fill="#4b2b21"/>
<path d="M21.8 12.4 Q28 11.4 31.4 15 Q33 16.6 34.5 19.8 L35.5 11 Z" fill="#4b2b21"/>
<ellipse cx="12.4" cy="25.4" rx="2.6" ry="4.2" fill="#343b4a"/>
<rect x="33" y="19" width="1.8" height="4.6" rx=".8" fill="#3a4150"/>
<path d="M35.6 23 Q37.2 28 34.4 31.6" fill="none" stroke="#8a9099" stroke-width="0.8"/>
<circle cx="33.8" cy="31.9" r="1.45" fill="#1f2636"/>
<ellipse cx="20.8" cy="22.3" rx="1.4" ry="0.75" fill="#5a3c36"/><ellipse cx="30" cy="20.4" rx="1.3" ry="0.75" fill="#5a3c36"/>
<path d="M22.3 30.2 Q26.5 34.4 30.9 29.8 Q26.5 31.2 22.3 30.2Z" fill="#fff" stroke="#d9908a" stroke-width="0.8"/>
</g>
</svg>
<div class="t" style="left:412.1px;top:754.00px;font-size:13px;line-height:13px;color:#2271b1;font-weight:normal;">Amelia Salazar seliman</div>
<div class="t" style="left:634px;top:754.00px;font-size:13px;line-height:13px;color:#50575e;font-weight:normal;">1</div>
<div class="t" style="left:757.6px;top:754.00px;font-size:13px;line-height:13px;color:#50575e;font-weight:normal;">1321321231</div>
<div class="t" style="left:904.8px;top:754.00px;font-size:13px;line-height:13px;color:#50575e;font-weight:normal;">mose.kris@mckenzie.com</div>
<div class="abs" style="left:1135px;top:742px;width:71px;height:33px;background:#fff;border:1px solid #dddddd"></div>
<svg style="left:1147px;top:754px" width="15" height="10" viewBox="0 0 15 10"><path d="M1 4.7 Q7.5 -2 14 4.7 Q7.5 11.4 1 4.7Z" fill="none" stroke="#333" stroke-width="0.9"/><circle cx="7.5" cy="4.2" r="2.7" fill="#333"/><circle cx="6.4" cy="3.2" r=".7" fill="#fff"/></svg>
<div class="t" style="left:1165.2px;top:750.80px;font-size:13px;line-height:13px;color:#333;font-weight:normal;">View</div>
<div class="abs" style="left:1209px;top:742px;width:49px;height:33px;background:#12abc9"></div>
<div class="t" style="left:1222.7px;top:750.80px;font-size:13px;line-height:13px;color:#fff;font-weight:normal;">Edit</div>
<div class="abs" style="left:1261px;top:742px;width:64px;height:33px;background:#ef5557"></div>
<div class="t" style="left:1274.7px;top:750.80px;font-size:13px;line-height:13px;color:#fff;font-weight:normal;">Delete</div></body></html>
